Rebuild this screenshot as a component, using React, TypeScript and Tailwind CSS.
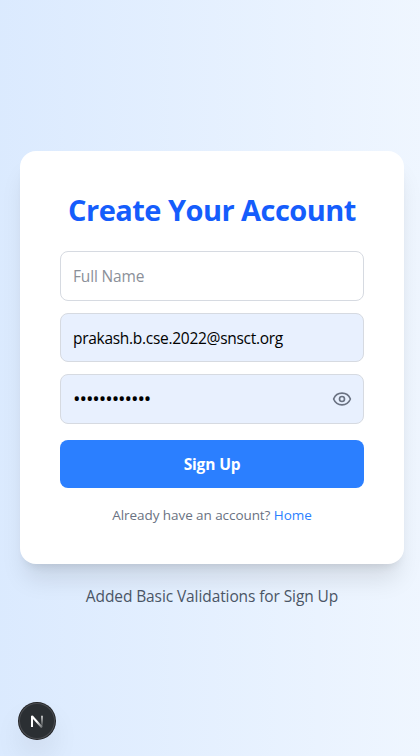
import React from "react";
import { Eye } from "lucide-react";

const field =
  "flex h-[49.6px] items-center rounded-lg border border-[#d6dae1] px-3 text-[15.5px]";

function NextBadge() {
  return (
    <div className="absolute bottom-[17px] left-[19px] flex size-9 items-center justify-center rounded-full bg-[#2b2f33] shadow-[0_0_0_1px_#222325,inset_0_0_0_1px_#4a4c50,0_16px_32px_-8px_rgba(0,0,0,0.24)]">
      <svg width="14" height="14" viewBox="0 0 14 14" fill="none">
        <defs>
          <linearGradient id="diag" x1="7" y1="7" x2="13" y2="14" gradientUnits="userSpaceOnUse">
            <stop stopColor="#fff" />
            <stop offset="1" stopColor="#fff" stopOpacity="0.2" />
          </linearGradient>
          <linearGradient id="stem" x1="11" y1="1.5" x2="11" y2="12" gradientUnits="userSpaceOnUse">
            <stop stopColor="#fff" stopOpacity="0.8" />
            <stop offset="1" stopColor="#fff" stopOpacity="0.1" />
          </linearGradient>
        </defs>
        <path d="M2 2.2L12 13.5" stroke="url(#diag)" strokeWidth="2.1" />
        <path d="M2 13V1.8" stroke="#fff" strokeWidth="2" />
        <path d="M12 1.8V12" stroke="url(#stem)" strokeWidth="1.8" />
      </svg>
    </div>
  );
}

export default function App() {
  return (
    <div className="relative flex h-[756px] flex-col bg-linear-to-r from-blue-100 to-blue-50 pt-[151px] pr-4 pl-5 font-['Open_Sans','Noto_Sans',sans-serif]">
      <div className="h-[412.8px] rounded-2xl bg-white p-10 shadow-xl">
        <h2 className="mb-[23px] pt-px text-center text-[29px] leading-9 font-bold whitespace-nowrap text-[#155dfc]">
          <span className="tracking-[-0.53px]">Create Your Account</span>
        </h2>
        <div className="flex flex-col gap-3">
          <div className={`${field} text-[#8b9099]`}>
            <span className="pt-px tracking-[-0.17px]">Full Name</span>
          </div>
          <div className={`${field} bg-[#e8f0fe] text-black`}>
            <span className="pt-0.5 tracking-[-0.29px]">prakash.b.cse.2022@snsct.org</span>
          </div>
          <div className={`${field} justify-between bg-[#e8f0fe] text-black`}>
            <span className="text-xl leading-5 tracking-[-1.08px]">••••••••••••</span>
            <Eye size={20} className="-mr-px text-gray-500" />
          </div>
        </div>
        <button className="mt-4 block h-12 w-full rounded-lg bg-[#2b7fff] pt-0.5 text-[15.5px] font-bold text-white">
          <span className="tracking-[-0.15px]">Sign Up</span>
        </button>
        <p className="mt-[17px] text-center text-[13.5px] leading-5 whitespace-nowrap text-gray-500">
          <span className="tracking-[-0.07px]">
            Already have an account? <a className="text-[#2b7fff]">Home</a>
          </span>
        </p>
      </div>
      <p className="mt-5 text-center text-[15.5px] leading-6 whitespace-nowrap text-gray-600">
        <span className="tracking-[-0.1px]">Added Basic Validations for Sign Up</span>
      </p>
      <NextBadge />
    </div>
  );
}
